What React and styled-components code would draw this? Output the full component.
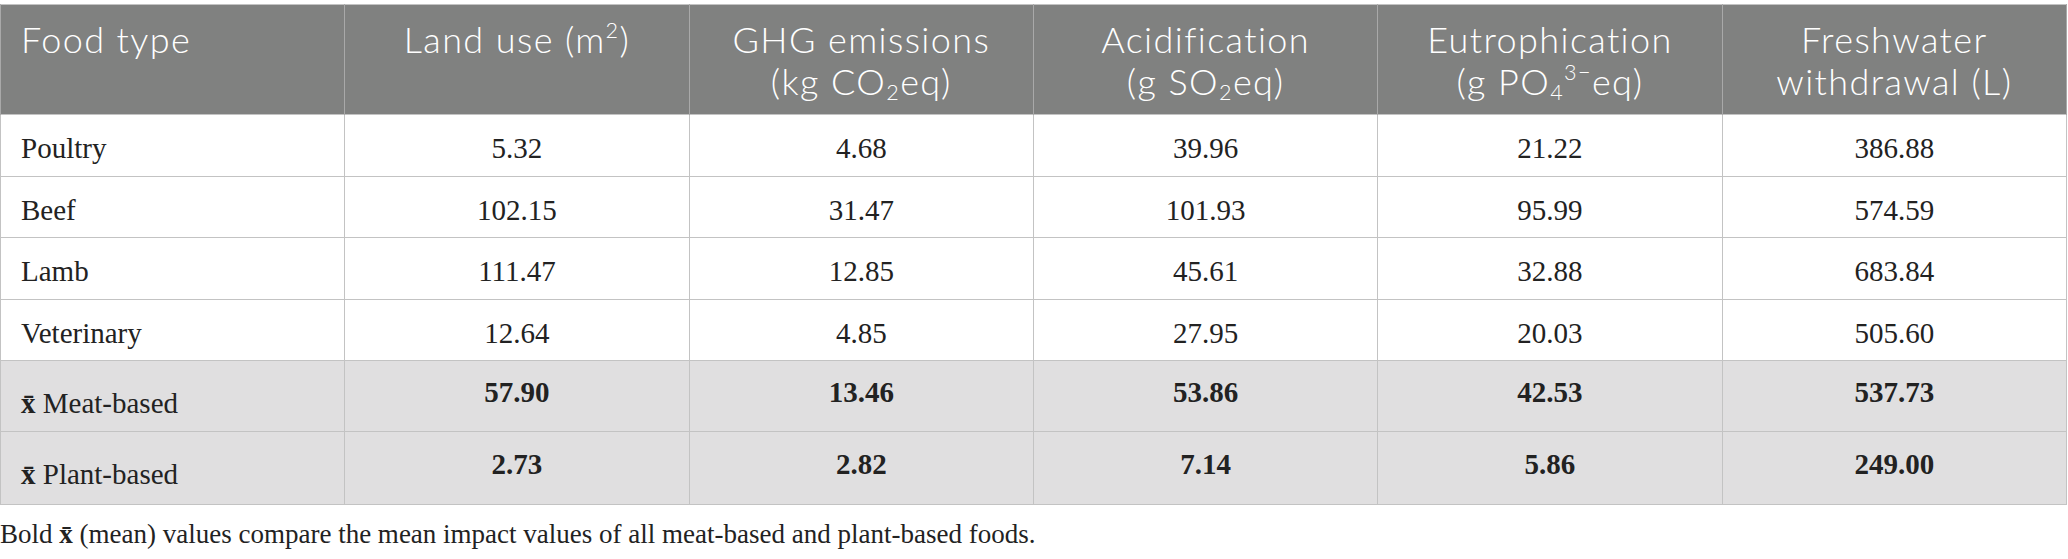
import React from "react";
import styled, { createGlobalStyle } from "styled-components";

const Global = createGlobalStyle`
  html, body { margin: 0; padding: 0; background: #ffffff; }
  body { font-family: "Liberation Serif", "Times New Roman", serif; color: #222; }
`;

const Page = styled.div`
  padding-top: 4px;
  width: 2068px;
`;

const Table = styled.table`
  width: 2067px;
  table-layout: fixed;
  border-collapse: collapse;
  border: 1px solid #c3c3c3;
`;

const HeadCell = styled.th`
  background: #808180;
  color: #ffffff;
  font-family: Lato, "Open Sans", sans-serif;
  font-weight: 300;
  font-size: 36px;
  letter-spacing: 1.4px;
  line-height: 42px;
  padding: 13px 20px 12px;
  text-align: ${(p) => (p.$left ? "left" : "center")};
  vertical-align: top;
  border-left: 1px solid #a9a9a9;
  border-right: 1px solid #a9a9a9;
`;

const Row = styled.tr`
  background: ${(p) => (p.$mean ? "#e0dfe0" : "#ffffff")};
`;

const Cell = styled.td`
  border: 1px solid #c3c3c3;
  font-family: "Liberation Serif", "Times New Roman", serif;
  font-size: 29px;
  line-height: 32px;
  font-weight: ${(p) => (p.$bold ? 700 : 400)};
  color: #222;
  text-align: ${(p) => (p.$left ? "left" : "center")};
  vertical-align: top;
  padding: ${(p) => p.$pad};
  padding-left: 20px;
  padding-right: 20px;
  white-space: nowrap;
`;

const Sup = styled.sup`
  font-size: 0.6em;
  line-height: 0;
  vertical-align: 0.7em;
`;

const Sub = styled.sub`
  font-size: 0.6em;
  line-height: 0;
  vertical-align: -0.25em;
`;

const Mean = styled.b`
  font-weight: 700;
`;

const Caption = styled.p`
  margin: 11px 0 0;
  font-family: "Liberation Serif", "Times New Roman", serif;
  font-size: 27px;
  line-height: 36px;
  color: #222;
`;

const rows = [
  ["Poultry", "5.32", "4.68", "39.96", "21.22", "386.88"],
  ["Beef", "102.15", "31.47", "101.93", "95.99", "574.59"],
  ["Lamb", "111.47", "12.85", "45.61", "32.88", "683.84"],
  ["Veterinary", "12.64", "4.85", "27.95", "20.03", "505.60"],
];

const means = [
  { label: "Meat-based", values: ["57.90", "13.46", "53.86", "42.53", "537.73"], num: "15px 20px 23px", lab: "26px 20px 12px" },
  { label: "Plant-based", values: ["2.73", "2.82", "7.14", "5.86", "249.00"], num: "16px 20px 24px", lab: "26px 20px 14px" },
];

const XBar = () => <Mean>x̄</Mean>;

export default function App() {
  return (
    <Page>
      <Global />
      <Table>
        <thead>
          <tr>
            <HeadCell $left>Food type</HeadCell>
            <HeadCell>
              Land use (m<Sup>2</Sup>)
            </HeadCell>
            <HeadCell>
              GHG emissions
              <br />
              (kg CO<Sub>2</Sub>eq)
            </HeadCell>
            <HeadCell>
              Acidification
              <br />
              (g SO<Sub>2</Sub>eq)
            </HeadCell>
            <HeadCell>
              Eutrophication
              <br />
              (g PO<Sub>4</Sub>
              <Sup>3−</Sup>eq)
            </HeadCell>
            <HeadCell>
              Freshwater
              <br />
              withdrawal (L)
            </HeadCell>
          </tr>
        </thead>
        <tbody>
          {rows.map((r) => (
            <Row key={r[0]}>
              {r.map((v, i) => (
                <Cell key={i} $left={i === 0} $pad="17px 20px 11.5px">
                  {v}
                </Cell>
              ))}
            </Row>
          ))}
          {means.map((m) => (
            <Row key={m.label} $mean>
              <Cell $left $pad={m.lab}>
                <XBar /> {m.label}
              </Cell>
              {m.values.map((v, i) => (
                <Cell key={i} $bold $pad={m.num}>
                  {v}
                </Cell>
              ))}
            </Row>
          ))}
        </tbody>
      </Table>
      <Caption>
        Bold <XBar /> (mean) values compare the mean impact values of all meat-based and plant-based foods.
      </Caption>
    </Page>
  );
}
